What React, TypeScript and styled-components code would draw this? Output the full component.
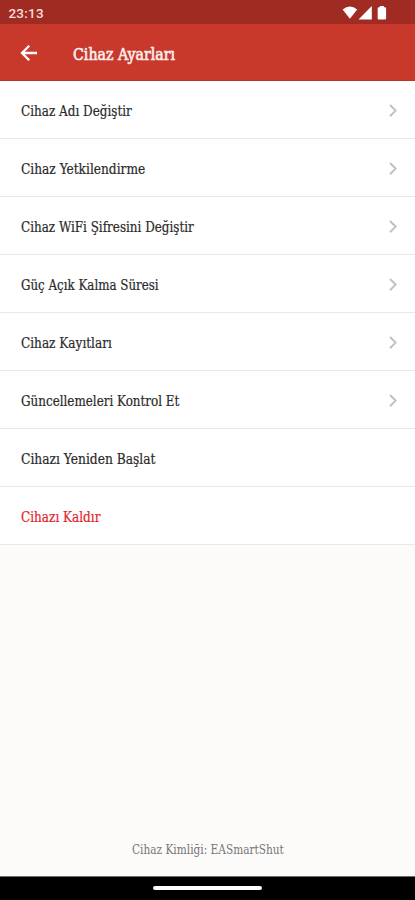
import React from "react";
import styled, { createGlobalStyle } from "styled-components";

const Global = createGlobalStyle`
  * { box-sizing: border-box; }
  body { margin: 0; background: #fbfaf8; }
`;

const Screen = styled.div`
  width: 100%;
  height: 900px;
  display: flex;
  flex-direction: column;
  background: #fcfbf9;
  font-family: "DejaVu Serif Condensed", "DejaVu Serif", serif;
  font-stretch: condensed;
  overflow: hidden;
`;

const StatusBar = styled.div`
  height: 24px;
  flex: none;
  display: flex;
  align-items: center;
  justify-content: space-between;
  padding: 2px 27px 0 8.5px;
  background: #9f2b22;
`;

const Clock = styled.span`
  font: 500 13.5px/22px Roboto, sans-serif;
  letter-spacing: 0.2px;
  color: #f8dfdc;
`;

const Header = styled.header`
  height: 57px;
  flex: none;
  display: flex;
  align-items: center;
  padding-left: 20px;
  background: #c8382b;
  border-bottom: 1px solid #bc3429;
`;

const Label = styled.span<{ $scale: number }>`
  display: inline-block;
  white-space: nowrap;
  transform: scaleX(${(p) => p.$scale});
  transform-origin: left center;
`;

const Title = styled.h1`
  margin: 5px 0 0 35px;
  font-size: 16.5px;
  line-height: 24px;
  font-weight: 400;
  -webkit-text-stroke: 0.6px #fdeeec;
  color: #fdeeec;
`;

const List = styled.ul`
  margin: 0;
  padding: 0;
  list-style: none;
`;

const Row = styled.li<{ $danger?: boolean }>`
  height: 58px;
  display: flex;
  align-items: center;
  justify-content: space-between;
  padding: 2px 17px 0 21px;
  background: #fff;
  border-bottom: 1px solid #e9e9e9;
  font-size: 14px;
  -webkit-text-stroke: 0.2px currentColor;
  color: ${(p) => (p.$danger ? "#e3242b" : "#2b2b2b")};
`;

const Footer = styled.footer`
  margin-top: auto;
  height: 55px;
  padding-left: 132px;
  font-size: 13px;
  line-height: 57px;
  color: #777;
`;

const NavBar = styled.div`
  height: 24px;
  flex: none;
  display: flex;
  justify-content: center;
  padding-top: 9px;
  background: #000;
  border-top: 1px solid #6c6c6b;
`;

const HomeHandle = styled.div`
  width: 109px;
  height: 4px;
  border-radius: 2px;
  background: #fff;
`;

const items = [
  { text: "Cihaz Adı Değiştir", scale: 0.953, arrow: true },
  { text: "Cihaz Yetkilendirme", scale: 0.968, arrow: true },
  { text: "Cihaz WiFi Şifresini Değiştir", scale: 0.949, arrow: true },
  { text: "Güç Açık Kalma Süresi", scale: 0.942, arrow: true },
  { text: "Cihaz Kayıtları", scale: 0.96, arrow: true },
  { text: "Güncellemeleri Kontrol Et", scale: 0.949, arrow: true },
  { text: "Cihazı Yeniden Başlat", scale: 0.974, arrow: false },
  { text: "Cihazı Kaldır", scale: 0.957, arrow: false, danger: true },
];

const BackIcon = () => (
  <svg width="18" height="18" viewBox="0 0 18 18" fill="none" stroke="#fff" strokeWidth="2.3">
    <path d="M17 10H2.5M9.2 2.8L2 10l7.2 7.2" />
  </svg>
);

const Chevron = () => (
  <svg width="10" height="14" viewBox="0 0 10 14" fill="none" stroke="#c2c2c2" strokeWidth="2">
    <path d="M2 1L7.6 6.6l-5.6 5.6" />
  </svg>
);

const StatusIcons = () => (
  <svg width="46" height="16" viewBox="0 0 46 16" fill="#fff">
    <path d="M0.6 4.6Q8-1.6 15.2 4.6L7.9 13.7Z" />
    <path d="M29.8 1V14.6H16.5Z" />
    <path d="M37.8 1h4.2v1.3h1q1.1 0 1.1 1.1v10.1q0 1.1-1.1 1.1h-6.2q-1.1 0-1.1-1.1V3.4q0-1.1 1.1-1.1h1z" />
  </svg>
);

export default function App() {
  return (
    <Screen>
      <Global />
      <StatusBar>
        <Clock>23:13</Clock>
        <StatusIcons />
      </StatusBar>
      <Header>
        <BackIcon />
        <Title>
          <Label $scale={0.955}>Cihaz Ayarları</Label>
        </Title>
      </Header>
      <List>
        {items.map((item) => (
          <Row key={item.text} $danger={item.danger}>
            <Label $scale={item.scale}>{item.text}</Label>
            {item.arrow && <Chevron />}
          </Row>
        ))}
      </List>
      <Footer>
        <Label $scale={0.903}>Cihaz Kimliği: EASmartShut</Label>
      </Footer>
      <NavBar>
        <HomeHandle />
      </NavBar>
    </Screen>
  );
}
